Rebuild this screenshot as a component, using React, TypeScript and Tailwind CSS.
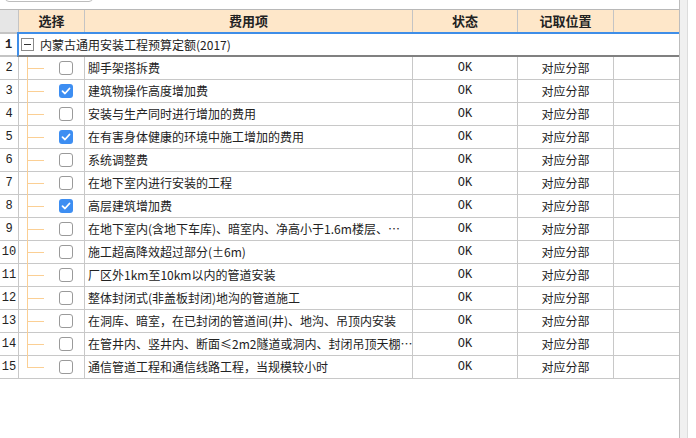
import React from "react";

type Row = { n: number; text: string; checked: boolean };

const rows: Row[] = [
  { n: 2, text: "脚手架搭拆费", checked: false },
  { n: 3, text: "建筑物操作高度增加费", checked: true },
  { n: 4, text: "安装与生产同时进行增加的费用", checked: false },
  { n: 5, text: "在有害身体健康的环境中施工增加的费用", checked: true },
  { n: 6, text: "系统调整费", checked: false },
  { n: 7, text: "在地下室内进行安装的工程", checked: false },
  { n: 8, text: "高层建筑增加费", checked: true },
  { n: 9, text: "在地下室内(含地下车库)、暗室内、净高小于1.6m楼层、…", checked: false },
  { n: 10, text: "施工超高降效超过部分(±6m)", checked: false },
  { n: 11, text: "厂区外1km至10km以内的管道安装", checked: false },
  { n: 12, text: "整体封闭式(非盖板封闭)地沟的管道施工", checked: false },
  { n: 13, text: "在洞库、暗室，在已封闭的管道间(井)、地沟、吊顶内安装", checked: false },
  { n: 14, text: "在管井内、竖井内、断面≤2m2隧道或洞内、封闭吊顶天棚…", checked: false },
  { n: 15, text: "通信管道工程和通信线路工程，当规模较小时", checked: false },
];

const cjk = "font-['Noto_Sans_CJK_SC','Noto_Sans',sans-serif]";
const mono = "font-['Liberation_Mono','DejaVu_Sans_Mono',monospace]";

function Checkbox({ checked }: { checked: boolean }) {
  if (checked) {
    return (
      <div className="w-[14px] h-[14px] rounded-[3px] bg-[#3d8ef2] flex items-center justify-center">
        <svg width="10" height="10" viewBox="0 0 10 10">
          <path d="M1.5 5.2 L4 7.5 L8.5 2.5" fill="none" stroke="#fff" strokeWidth="1.8" strokeLinecap="round" strokeLinejoin="round" />
        </svg>
      </div>
    );
  }
  return <div className="w-[14px] h-[14px] rounded-[3px] border border-[#9a9a9a] bg-white" />;
}

export default function App() {
  return (
    <div className="w-[696px] h-[438px] bg-white flex overflow-hidden">
      <div className="w-[679px] flex flex-col">
        <div className="h-[9px] overflow-hidden pl-[5px]">
          <div className="w-[88px] h-[22px] -mt-[20px] rounded-[4px] border border-[#bdbdbd] bg-white" />
        </div>
        {/* header */}
        <div className={`grid grid-cols-[19px_66px_328px_105px_96px_65px] h-[23px] border-t border-[#b8b8b8] text-[13px] font-bold text-[#222] ${cjk}`}>
          <div className="bg-[#e6e6e6] border-r border-[#c4c4c4]" />
          <div className="bg-[#fee7c9] border-r border-[#c4c4c4] flex items-center justify-center">选择</div>
          <div className="bg-[#fee7c9] border-r border-[#c4c4c4] flex items-center justify-center">费用项</div>
          <div className="bg-[#fee7c9] border-r border-[#c4c4c4] flex items-center justify-center">状态</div>
          <div className="bg-[#fee7c9] border-r border-[#c4c4c4] flex items-center justify-center">记取位置</div>
          <div className="bg-[#fee7c9]" />
        </div>
        {/* row 1 */}
        <div className="flex h-[25px]">
          <div className={`w-[17px] border-t-2 border-b-2 border-t-[#c4c4c4] border-b-[#c4c4c4] flex items-center justify-center text-[12px] font-bold text-[#222] ${mono}`}>
            1
          </div>
          <div className={`flex-1 border-t-2 border-l-2 border-b-2 border-t-[#3f8ee8] border-l-[#3f8ee8] border-b-[#808080] flex items-center text-[12px] text-[#222] ${cjk}`}>
            <div className="ml-[2px] w-[13px] h-[13px] border border-[#8a8a8a] flex items-center justify-center">
              <div className="w-[7px] h-[1px] bg-[#333]" />
            </div>
            <span className="ml-[6px] whitespace-nowrap">内蒙古通用安装工程预算定额(2017)</span>
          </div>
        </div>
        {/* rows */}
        {rows.map((r, i) => (
          <div
            key={r.n}
            className="grid grid-cols-[19px_66px_328px_105px_96px_65px] h-[23px] border-b border-[#c8c8c8] text-[12px] text-[#222]"
          >
            <div className={`border-r border-[#c8c8c8] flex items-center justify-center ${mono}`}>{r.n}</div>
            <div className="border-r border-[#c8c8c8] relative flex items-center">
              <div className={`absolute left-[8px] top-0 w-px bg-[#fbcf94] ${i === rows.length - 1 ? "h-[11px]" : "h-[23px]"}`} />
              <div className="ml-[8px] w-[17px] h-px bg-[#fbcf94]" />
              <div className="ml-[15px]">
                <Checkbox checked={r.checked} />
              </div>
            </div>
            <div className={`border-r border-[#c8c8c8] flex items-center pl-[3px] overflow-hidden whitespace-nowrap ${cjk}`}>
              {r.text}
            </div>
            <div className={`border-r border-[#c8c8c8] flex items-center justify-center ${mono}`}>OK</div>
            <div className={`border-r border-[#c8c8c8] flex items-center justify-center ${cjk}`}>对应分部</div>
            <div />
          </div>
        ))}
      </div>
      <div className="w-[9px] h-full bg-[#f0f0f0] border-l border-r border-l-[#bdbdbd] border-r-[#dcdcdc]" />
      <div className="flex-1 bg-white" />
    </div>
  );
}
